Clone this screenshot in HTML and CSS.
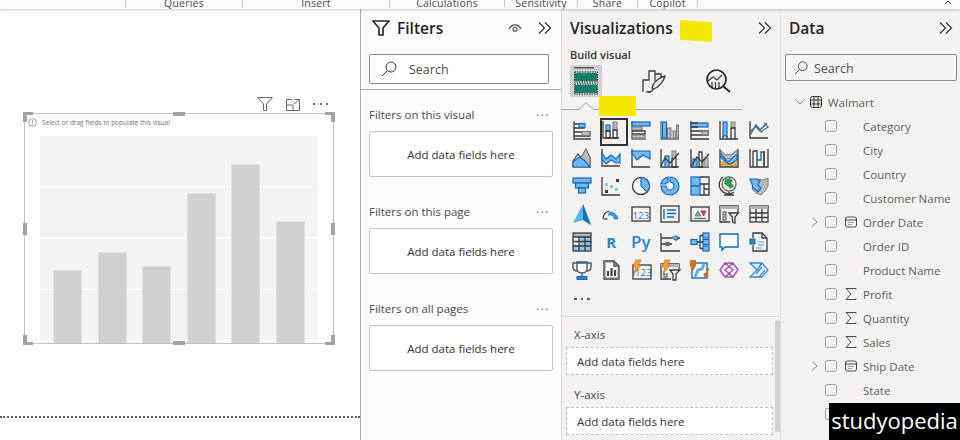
FILE: index.html
```html
<!DOCTYPE html>
<html lang="en">
<head>
<meta charset="utf-8">
<title>Power BI report view</title>
<link rel="stylesheet" href="styles.css">
</head>
<body>
<div class="app">
  <header class="ribbon">
    <div class="seg seg-0"></div>
    <div class="seg seg-q">Queries</div>
    <div class="seg seg-i">Insert</div>
    <div class="seg seg-c">Calculations</div>
    <div class="seg seg-se">Sensitivity</div>
    <div class="seg seg-sh">Share</div>
    <div class="seg seg-co">Copilot</div>
    <svg class="collapse" viewBox="0 0 10 4"><path d="M1 4 4 1 7 4"/></svg>
  </header>
  <main class="main">
    <section class="canvas">
      <div class="actions">
        <svg class="act-funnel" viewBox="0 0 16 14"><path d="M.5.5h15L9.5 7v6.5h-3V7z"/></svg>
        <svg class="act-focus" viewBox="0 0 14 12"><path d="M.5 1V11.500H13.500V1.500M.5.500H6M8.500.500H13.500V5M.5 6H7V11.500M8 5 13 .8"/></svg>
        <div class="act-dots"><i></i><i></i><i></i></div>
      </div>
      <div class="visual">
        <span class="h c-tl"></span><span class="h c-tr"></span><span class="h c-bl"></span><span class="h c-br"></span>
        <span class="h m-t"></span><span class="h m-b"></span><span class="h m-l"></span><span class="h m-r"></span>
        <div class="hint">
          <svg class="hint-ic" viewBox="0 0 9 9"><circle cx="4.500" cy="4.500" r="3.900"/><path d="M4.500 2.200v3M4.500 6v1"/></svg>
          <span>Select or drag fields to populate this visual</span>
        </div>
        <div class="chart">
          <div class="bar" style="height:73px"></div>
          <div class="bar" style="height:91px"></div>
          <div class="bar" style="height:77px"></div>
          <div class="bar" style="height:150px"></div>
          <div class="bar" style="height:179px"></div>
          <div class="bar" style="height:122px"></div>
        </div>
      </div>
      <div class="page-edge"></div>
    </section>

    <section class="filters">
      <div class="pane-head">
        <svg class="big-funnel" viewBox="0 0 18 16"><path d="M1 1h16l-6 7v7H7V8z"/></svg>
        <h2 class="title">Filters</h2>
        <svg class="eye" viewBox="0 0 14 10"><path d="M1 6c3-5.500 9-5.500 12 0"/><circle cx="7" cy="6.300" r="2"/></svg>
        <svg class="chev" viewBox="0 0 14 12"><path d="M1 .5 6.500 6 1 11.500M7 .5 12.500 6 7 11.500"/></svg>
      </div>
      <div class="search f-search">
        <svg class="mag" viewBox="0 0 16 16"><circle cx="10" cy="6" r="5"/><path d="M6.500 9.500 1 15"/></svg>
        <span>Search</span>
      </div>
      <div class="rule"></div>
      <div class="fgroup">
        <div class="fhead"><span>Filters on this visual</span><b class="red-dots">...</b></div>
        <div class="fbox">Add data fields here</div>
      </div>
      <div class="fgroup">
        <div class="fhead"><span>Filters on this page</span><b class="red-dots">...</b></div>
        <div class="fbox">Add data fields here</div>
      </div>
      <div class="fgroup">
        <div class="fhead"><span>Filters on all pages</span><b class="red-dots">...</b></div>
        <div class="fbox">Add data fields here</div>
      </div>
    </section>

    <section class="viz">
      <div class="pane-head viz-head">
        <h2 class="title">Visualizations</h2>
        <svg class="chev" viewBox="0 0 14 12"><path d="M1 .5 6.500 6 1 11.500M7 .5 12.500 6 7 11.500"/></svg>
      </div>
      <div class="build">Build visual</div>
      <div class="tabs">
        <div class="tab-active">
          <svg class="tab-ic" viewBox="0 0 26 28"><path class="l" d="M1 .8H21"/><rect class="teal" x="2" y="6" width="22" height="8"/><rect class="teal" x="2" y="18" width="22" height="8"/><rect class="dash" x="1.500" y="5" width="23" height="10"/><rect class="dash" x="1.500" y="17" width="23" height="10"/></svg>
        </div>
        <svg class="tab-brush" viewBox="0 0 24 24"><path class="l" d="M1 23V11H7V2H13V12M13 5H19V9"/><path class="l" d="M4 23H9"/><path class="l" d="M10 19C11 13 18 8 23 7 22 12 17 18 12 20Z"/><path class="l" d="M6 23C9 23 11 22 11 19"/></svg>
        <svg class="tab-mag" viewBox="0 0 25 24"><circle class="l2" cx="10.500" cy="10.500" r="9.500"/><path class="l2" d="M17.500 17.500 24 23"/><path class="l" d="M2 12 7 8 11 11 16 6"/><path class="l" d="M6 13V19M9.500 13V20M13 13V19"/></svg>
      </div>
      <div class="tabline"><svg class="caret" viewBox="0 0 16 8"><path d="M0 8 8 .8 16 8"/></svg></div>

      <div class="gallery">
        <!-- row 1 -->
        <div class="cell"><svg class="ic" viewBox="0 0 20 20"><path class="l" d="M2 1V19H19M2 4H12V8H2M2 12H18V16H2"/><rect class="fb" x="7" y="3.500" width="6" height="4"/><rect class="fg" x="10" y="11.500" width="8" height="4"/></svg></div>
        <div class="cell cell-sel"><svg class="ic" viewBox="0 0 20 20"><path class="l" d="M2 1V18H18"/><rect class="fb" x="5" y="5" width="4" height="6"/><path class="l" d="M5 11H9V18H5z"/><rect class="fg" x="12" y="2" width="4" height="8"/><path class="l" d="M12 10H16V18H12z"/></svg></div>
        <div class="cell"><svg class="ic" viewBox="0 0 20 20"><path class="l-g" d="M1 1V19H15"/><rect class="fb" x="1" y="2" width="18" height="4"/><rect class="fg" x="1" y="7" width="10" height="3"/><path class="l" d="M1 11H14V14H1"/><rect class="fg" x="1" y="15" width="13" height="3"/></svg></div>
        <div class="cell"><svg class="ic" viewBox="0 0 20 20"><path class="l-g" d="M1 1V19H19"/><rect class="fb" x="2.500" y="2" width="4" height="16"/><rect class="fg" x="7.500" y="8" width="3.500" height="10"/><rect class="fg" x="13" y="11" width="3" height="7"/><rect class="fg" x="16.500" y="5" width="2" height="13"/></svg></div>
        <div class="cell"><svg class="ic" viewBox="0 0 20 20"><path class="l" d="M1 1V19H19"/><rect class="fb" x="1" y="3" width="17" height="4"/><path class="l" d="M1 3H8M1 7H8M1 11H18V15H1"/><rect class="fg" x="12" y="11" width="6" height="4"/></svg></div>
        <div class="cell"><svg class="ic" viewBox="0 0 20 20"><path class="l" d="M1 1V19H19"/><rect class="fb" x="4" y="2" width="4" height="14"/><path class="l" d="M4 16V19M8 16V19"/><rect class="fg" x="12" y="2" width="4" height="6"/><path class="l" d="M12 8H16V19M12 8V19"/></svg></div>
        <div class="cell"><svg class="ic" viewBox="0 0 20 20"><path class="l" d="M1 1V18H19"/><path class="b" d="M1 15 7 5 11 10 18 3"/><path class="l-g" d="M1 11 7 7 12 12 19 7 15 3"/></svg></div>
        <!-- row 2 -->
        <div class="cell"><svg class="ic" viewBox="0 0 20 20"><path class="fw" d="M1 13 6 6 9 10 14 1 18 10V19H1z"/><path class="fg" d="M14 1 18 10V19H11L9 10z"/><path class="fb" d="M1 19V14L7 9 12 12 18 19z"/></svg></div>
        <div class="cell"><svg class="ic" viewBox="0 0 20 20"><path class="l" d="M1 1V18H19"/><path class="fb" d="M1 5 5 11 10 7 15 11 19 6V15H15L10 12 5 16 1 11z"/></svg></div>
        <div class="cell"><svg class="ic" viewBox="0 0 20 20"><path class="l" d="M1 1V19H19"/><path class="fb" d="M1 5 6 12 12 7 19 11V3H1z"/></svg></div>
        <div class="cell"><svg class="ic" viewBox="0 0 20 20"><path class="l" d="M1 1V19H19"/><rect class="fb" x="5" y="8" width="4" height="11"/><rect class="fg" x="12" y="3" width="4" height="7"/><path class="l" d="M12 10V19H16V10"/><path class="l" d="M1 18 5 10 10 15 19 5"/></svg></div>
        <div class="cell"><svg class="ic" viewBox="0 0 20 20"><path class="l" d="M1 1V19H19"/><rect class="fb" x="3" y="11" width="4" height="8"/><path class="l" d="M9 4H12V19H9z"/><rect class="fg" x="14" y="10" width="4" height="9"/><path class="l" d="M1 18 7 9 12 14 19 6"/></svg></div>
        <div class="cell"><svg class="ic" viewBox="0 0 20 20"><path class="l" d="M1 1V19H19V1"/><path class="fg" d="M2 3 7 7 13 6 18 2V8L13 11 7 11 2 7z"/><path class="fo" d="M2 13H18V18H2z"/><path class="fb" d="M2 6C5 9 7 15 10 13 13 11 15 7 18 7V12C14 13 13 17 10 16 6 15 5 11 2 10z"/></svg></div>
        <div class="cell"><svg class="ic" viewBox="0 0 20 20"><path class="l" d="M1 1V19H19V1"/><path class="l" d="M4 3V19M8 12V19M4 3H8V19"/><path class="b" d="M8 12H12V4H15V19"/><path class="l" d="M15 3V19"/></svg></div>
        <!-- row 3 -->
        <div class="cell"><svg class="ic" viewBox="0 0 20 20"><rect class="fb" x="1" y="2" width="18" height="5"/><rect class="fb" x="3.500" y="7" width="13" height="5"/><rect class="fb" x="6.500" y="12" width="7" height="5"/></svg></div>
        <div class="cell"><svg class="ic" viewBox="0 0 20 20"><path class="l" d="M1 1V19H19"/><rect class="nb" x="4" y="7" width="3" height="3"/><rect class="nb" x="9" y="9" width="3" height="3"/><rect class="nb" x="14" y="12" width="3" height="3"/><rect class="nd" x="15" y="3" width="3" height="3"/><rect class="nd" x="4" y="14" width="3" height="3"/></svg></div>
        <div class="cell"><svg class="ic" viewBox="0 0 20 20"><circle class="l w" cx="10" cy="10" r="8.500"/><path class="fb" d="M10 1.500A8.500 8.500 0 0 1 18.500 10 8.500 8.500 0 0 1 16 16L10 10z"/></svg></div>
        <div class="cell"><svg class="ic" viewBox="0 0 20 20"><path class="fb" d="M10 1A9 9 0 1 1 1 10H6A4 4 0 1 0 10 6z"/><path class="fb" d="M8 1.200A9 9 0 0 0 1 8H6A4 4 0 0 1 8 6z"/></svg></div>
        <div class="cell"><svg class="ic" viewBox="0 0 20 20"><rect class="fb" x="1" y="1" width="9" height="9"/><rect class="fb" x="1" y="10" width="9" height="9"/><path class="l" d="M10 1H19V19H10M10 8H19M14 8V19M14 13H19"/></svg></div>
        <div class="cell"><svg class="ic" viewBox="0 0 20 20"><circle class="l-g" cx="10" cy="8" r="7"/><path class="green" d="M6 3 11 2 14 5 12 7 15 10 11 13 9 10 5 8z"/><path class="l" d="M4 1A9 9 0 0 0 15 16M10 16V19M5 19H15"/></svg></div>
        <div class="cell"><svg class="ic" viewBox="0 0 20 20"><path class="fg" d="M6 3 14 4 19 2 19 10 16 15 12 19 7 17 3 13z"/><path class="fb" d="M1 3H7L11 5 9 9 12 12 9 16 4 12 3 8z"/></svg></div>
        <!-- row 4 -->
        <div class="cell"><svg class="ic" viewBox="0 0 20 20"><path class="arrow" d="M11 0 19 21 11 16 1 19z"/><path class="arrow-d" d="M11 0 19 21 11 16z"/></svg></div>
        <div class="cell"><svg class="ic" viewBox="0 0 20 20"><path class="l" d="M2 15A8.500 8.500 0 0 1 8 7"/><path class="arc" d="M8 8A8.500 8.500 0 0 1 17 15H13.500A5 5 0 0 0 7 11"/><path class="l" d="M3 15H6.500"/></svg></div>
        <div class="cell"><svg class="ic" viewBox="0 0 20 20"><rect class="l" x="1" y="3" width="18" height="14"/><text class="n123" x="10" y="14.500">123</text></svg></div>
        <div class="cell"><svg class="ic" viewBox="0 0 20 20"><rect class="l" x="1" y="2" width="18" height="16"/><path class="b" d="M4 5V15M7 6H16M7 9.500H16M7 13H14"/></svg></div>
        <div class="cell"><svg class="ic" viewBox="0 0 20 20"><rect class="l" x="1" y="3" width="18" height="14"/><path class="tri-g" d="M5 12 8 7 11 12z"/><path class="tri-r" d="M11 7H16L13.500 12z"/><path class="l-g" d="M4 14.500H16"/></svg></div>
        <div class="cell"><svg class="ic" viewBox="0 0 20 20"><path class="l" d="M11 18H1V2H19V8"/><rect class="fg-n" x="1" y="2" width="18" height="3"/><rect class="l-g" x="4" y="8" width="3" height="3"/><rect class="l-g" x="4" y="13" width="3" height="3"/><path class="l w" d="M10 9H19.500L16 13V19L13.500 18V13z"/></svg></div>
        <div class="cell"><svg class="ic" viewBox="0 0 20 20"><rect class="l" x="1" y="2" width="18" height="16"/><rect class="fg-n" x="1" y="2" width="18" height="3"/><path class="l" d="M1 9H19M1 13.500H19M7 5V18M13 5V18"/></svg></div>
        <!-- row 5 -->
        <div class="cell"><svg class="ic" viewBox="0 0 20 20"><rect class="fg-n" x="1" y="1" width="18" height="4"/><rect class="nb" x="8" y="5" width="11" height="14"/><rect class="nb" x="1" y="13" width="18" height="6"/><rect class="l" x="1" y="1" width="18" height="18"/><path class="l" d="M1 5H19M1 9.500H19M1 14H19M7 5V19M13 5V19"/></svg></div>
        <div class="cell"><span class="lang lang-r">R</span></div>
        <div class="cell"><span class="lang lang-py">Py</span></div>
        <div class="cell"><svg class="ic" viewBox="0 0 20 20"><path class="l" d="M1 1V19H20M1 6H20M1 12H12"/><circle class="fb" cx="16" cy="6" r="2"/><rect class="l-g" x="6" y="10.500" width="3" height="3"/><rect class="fg" x="13" y="4.500" width="2" height="2"/></svg></div>
        <div class="cell"><svg class="ic" viewBox="0 0 20 20"><rect class="fb" x="1" y="7.500" width="6" height="5"/><rect class="fb" x="13" y="1" width="6" height="5"/><rect class="fb" x="13" y="7.500" width="6" height="5"/><rect class="fb" x="13" y="14" width="6" height="5"/><path class="l" d="M7 10H13M10 3.500V16.500M10 3.500H13M10 16.500H13"/></svg></div>
        <div class="cell"><svg class="ic" viewBox="0 0 20 20"><path class="b w" d="M1 2H19V15H6L3 18V15H1z"/></svg></div>
        <div class="cell"><svg class="ic" viewBox="0 0 20 20"><path class="l" d="M4 6V1H13L18 6V19H4V13"/><path class="l" d="M13 1V6H18"/><rect class="fb-s" x="1" y="7" width="5" height="5"/><path class="b-t" d="M9 10H15M9 13H15M7 16H13"/></svg></div>
        <!-- row 6 -->
        <div class="cell"><svg class="ic" viewBox="0 0 20 20"><path class="l-g2" d="M5 3H1V7C1 10 3 11 6 11M15 3H19V7C19 10 17 11 14 11"/><path class="l-g2 w" d="M5 2H15V9C15 12 12 13 10 13 8 13 5 12 5 9z"/><path class="b" d="M5 3H15M10 14V17"/><rect class="fb-s" x="5" y="16.500" width="10" height="3"/></svg></div>
        <div class="cell"><svg class="ic" viewBox="0 0 20 20"><path class="l w" d="M3 1H13L18 6V19H3z"/><path class="fg-s" d="M3 1H13L18 6V19H3V1ZM4.500 2.500V17.500H16.500V7H12V2.500z"/><path class="dbar" d="M7 11V16M10.500 8V16M14 10V16"/></svg></div>
        <div class="cell"><svg class="ic" viewBox="0 0 20 20"><rect class="l" x="2" y="5" width="18" height="14"/><text class="n123" x="12.500" y="16">123</text><path class="bolt" d="M5 0H10L7.500 5H10L3 14 5 7H2z"/></svg></div>
        <div class="cell"><svg class="ic" viewBox="0 0 20 20"><path class="l" d="M11 19H1V4H19V9"/><rect class="fg-n" x="1" y="4" width="18" height="3"/><path class="l w" d="M10 10H20L16 14V20H13V14z"/><rect class="l-g" x="4" y="14" width="3" height="3"/><path class="bolt" d="M5 0H10L7.500 5H10L3 14 5 7H2z"/></svg></div>
        <div class="cell"><svg class="ic" viewBox="0 0 20 20"><rect class="b w" x="2" y="3" width="15" height="15"/><path class="river" d="M5 17 8 10 12 9 14 4"/><path class="pin" d="M0 0H6V6L3 11 0 6z"/><rect class="or" x="16" y="8" width="3" height="3"/><circle class="or" cx="16" cy="15" r="2.500"/></svg></div>
        <div class="cell"><svg class="ic" viewBox="0 0 20 20"><path class="pa" d="M6 3H14L19 10 14 17H6L1 10zM6 3 14 10 6 17M14 3 6 10 14 17"/></svg></div>
        <div class="cell"><svg class="ic" viewBox="0 0 20 20"><path class="pw" d="M1 3H13L19 10 13 17H1L8 10zM8 10 13 3M7 14 13 7M10 17 16 10"/></svg></div>
        <!-- row 7 -->
        <div class="cell"><div class="more"><i></i><i></i><i></i></div></div>
      </div>

      <div class="wells">
        <div class="well-label">X-axis</div>
        <div class="well">Add data fields here</div>
        <div class="well-label">Y-axis</div>
        <div class="well">Add data fields here</div>
        <span class="thumb"></span>
      </div>
      <span class="mark mark-a"></span>
      <span class="mark mark-b"></span>
    </section>

    <section class="data">
      <div class="pane-head data-head">
        <h2 class="title">Data</h2>
        <svg class="chev" viewBox="0 0 14 12"><path d="M1 .5 6.500 6 1 11.500M7 .5 12.500 6 7 11.500"/></svg>
      </div>
      <div class="search d-search">
        <svg class="mag" viewBox="0 0 16 16"><circle cx="10" cy="6" r="5"/><path d="M6.500 9.500 1 15"/></svg>
        <span>Search</span>
      </div>
      <div class="table-row">
        <svg class="tw-down" viewBox="0 0 10 6"><path d="M.5.5 5 5 9.500.5"/></svg>
        <svg class="tbl" viewBox="0 0 12 12"><rect x=".5" y=".5" width="11" height="11" rx="2"/><path d="M.5 4H11.500M.5 8H11.500M4 .5V11.500M8 .5V11.500"/></svg>
        <span>Walmart</span>
      </div>
      <ul class="fields">
        <li><i class="tw"></i><i class="cb"></i><i class="ty"></i><span>Category</span></li>
        <li><i class="tw"></i><i class="cb"></i><i class="ty"></i><span>City</span></li>
        <li><i class="tw"></i><i class="cb"></i><i class="ty"></i><span>Country</span></li>
        <li><i class="tw"></i><i class="cb"></i><i class="ty"></i><span>Customer Name</span></li>
        <li><svg class="tw" viewBox="0 0 15 12"><path d="M2 1.500 7 6 2 10.500"/></svg><i class="cb"></i><svg class="ty" viewBox="0 0 12 12"><rect x=".5" y="1" width="11" height="10" rx="2"/><path d="M.5 4H11.500M3.500 6.500h1M5.500 6.500h1M7.500 6.500h1M3.500 8.500h1M5.500 8.500h1"/></svg><span>Order Date</span></li>
        <li><i class="tw"></i><i class="cb"></i><i class="ty"></i><span>Order ID</span></li>
        <li><i class="tw"></i><i class="cb"></i><i class="ty"></i><span>Product Name</span></li>
        <li><i class="tw"></i><i class="cb"></i><svg class="ty" viewBox="0 0 12 12"><path d="M11 1.500V.5H1L6 6 1 11.500H11V10.500"/></svg><span>Profit</span></li>
        <li><i class="tw"></i><i class="cb"></i><svg class="ty" viewBox="0 0 12 12"><path d="M11 1.500V.5H1L6 6 1 11.500H11V10.500"/></svg><span>Quantity</span></li>
        <li><i class="tw"></i><i class="cb"></i><svg class="ty" viewBox="0 0 12 12"><path d="M11 1.500V.5H1L6 6 1 11.500H11V10.500"/></svg><span>Sales</span></li>
        <li><svg class="tw" viewBox="0 0 15 12"><path d="M2 1.500 7 6 2 10.500"/></svg><i class="cb"></i><svg class="ty" viewBox="0 0 12 12"><rect x=".5" y="1" width="11" height="10" rx="2"/><path d="M.5 4H11.500M3.500 6.500h1M5.500 6.500h1M7.500 6.500h1M3.500 8.500h1M5.500 8.500h1"/></svg><span>Ship Date</span></li>
        <li><i class="tw"></i><i class="cb"></i><i class="ty"></i><span>State</span></li>
        <li><i class="tw"></i><i class="cb"></i><i class="ty"></i><span></span></li>
      </ul>
      <div class="brand">studyopedia</div>
    </section>
  </main>
</div>
</body>
</html>
```

FILE: styles.css
```css
* { box-sizing: border-box; }
html, body { margin: 0; height: 100%; overflow: hidden; }
body { background: #fff; font-family: "Open Sans", "Noto Sans", sans-serif; color: #323130; }
.app { width: 960px; height: 440px; display: flex; flex-direction: column; overflow: hidden; }
svg { display: block; }
h2 { margin: 0; }

/* ribbon */
.ribbon { position: relative; z-index: 2; flex: 0 0 9px; height: 9px; display: flex; background: #fbfbfb; box-shadow: 0 1px 3px rgba(0,0,0,.22); overflow: hidden; }
.seg { height: 7px; border-right: 1px solid #c6c6c6; text-align: center; font-size: 10.500px; line-height: 7px; color: #4a4a4a; letter-spacing: .02em; }
.seg-0 { width: 126px; }
.seg-q { width: 117px; }
.seg-i { width: 147px; }
.seg-c { width: 115px; }
.seg-se { width: 73px; }
.seg-sh { width: 60px; }
.seg-co { width: 60px; }
.collapse { position: absolute; right: 6px; top: 0; width: 10px; height: 4px; fill: none; stroke: #333; stroke-width: 1; }

.main { flex: 1; display: flex; min-height: 0; }

/* canvas */
.canvas { flex: 0 0 361px; width: 361px; background: #fff; border-right: 1px solid #aeaeae; padding: 85px 0 0 24px; display: flex; flex-direction: column; }
.canvas > * { flex: none; }
.actions { width: 310px; height: 19px; display: flex; align-items: center; padding-left: 233px; }
.act-funnel { width: 16px; height: 14px; fill: none; stroke: #666; stroke-width: 1; }
.act-focus { width: 14px; height: 12px; margin-left: 13px; margin-top: 2px; fill: none; stroke: #666; stroke-width: 1; }
.act-dots { display: flex; gap: 4.500px; margin-left: 13px; }
.act-dots i { width: 2px; height: 2px; background: #707070; }
.visual { position: relative; width: 310px; height: 231px; border: 1px solid #c2c2c2; padding: 0 15px; }
.h { position: absolute; background: #a3a3a3; }
.c-tl, .c-tr, .c-bl, .c-br { width: 10px; height: 10px; background: none; border: 0 solid #a3a3a3; }
.c-tl { left: -2px; top: -2px; border-width: 3px 0 0 4px; }
.c-tr { right: -2px; top: -2px; border-width: 3px 4px 0 0; }
.c-bl { left: -2px; bottom: -2px; border-width: 0 0 3px 4px; }
.c-br { right: -2px; bottom: -2px; border-width: 0 4px 3px 0; }
.m-t { left: 148px; top: -2px; width: 12px; height: 4px; }
.m-b { left: 148px; bottom: -2px; width: 12px; height: 4px; }
.m-l { left: -2px; top: 109px; width: 4px; height: 12px; }
.m-r { right: -2px; top: 109px; width: 4px; height: 12px; }
.hint { height: 22px; margin-left: -12px; display: flex; align-items: center; gap: 5px; padding-bottom: 6px; font-size: 6.500px; color: #77706b; white-space: nowrap; }
.hint-ic { width: 9px; height: 9px; fill: none; stroke: #b26a4a; stroke-width: .7; }
.chart { height: 207px; width: 278px; padding: 0 13px; display: flex; align-items: flex-end; justify-content: space-between; background-color: #f3f3f3; background-image: repeating-linear-gradient(to bottom, #f3f3f3 0, #f3f3f3 50px, #fdfdfd 50px, #fdfdfd 51.500px); }
.bar { width: 29px; background: #d0d1d2; border: 1px solid #dfe0e0; border-bottom: 0; }
.page-edge { margin: 72px 0 0 -24px; width: 360px; border-top: 2px dotted #5c5c5c; }

/* panes */
.filters { flex: 0 0 201px; background: #fdfdfd; border-right: 1px solid #d6d4d2; padding-top: 8px; display: flex; flex-direction: column; }
.filters > *, .viz > *, .data > * { flex: none; }
.pane-head { height: 22px; display: flex; align-items: center; }
.title { font-size: 15.500px; font-weight: 600; line-height: 22px; color: #252423; flex: 1; }
.big-funnel { width: 18px; height: 16px; margin: 0 7px 0 11px; fill: none; stroke: #252423; stroke-width: 1.600; }
.eye { width: 14px; height: 10px; margin-right: 16px; fill: none; stroke: #444; stroke-width: 1.100; }
.chev { width: 14px; height: 12px; margin-right: 9px; fill: none; stroke: #323130; stroke-width: 1.200; }
.search { display: flex; align-items: center; background: #fff; border: 1px solid #8a8886; border-radius: 2px; font-size: 12.500px; color: #4f4d4b; }
.f-search { width: 180px; height: 30px; margin: 15px 0 0 8px; padding-left: 11px; gap: 12px; }
.mag { width: 16px; height: 16px; fill: none; stroke: #3b3a39; stroke-width: 1; }
.rule { margin-top: 5px; height: 1px; background: #b1b1b1; }
.fgroup { padding: 17px 8px 0; height: 97px; }
.fhead { height: 15px; display: flex; justify-content: space-between; align-items: center; font-size: 11.500px; color: #4a4846; }
.red-dots { font-weight: 400; font-size: 12px; letter-spacing: 1.500px; color: #bb4a2a; position: relative; top: -3px; right: 3px; }
.fbox { margin-top: 9px; height: 46px; border: 1px solid #c8c6c4; border-radius: 2px; background: #fff; display: flex; align-items: center; justify-content: center; font-size: 11.500px; color: #333; }

/* visualizations */
.viz { position: relative; flex: 0 0 219px; background: #f3f2f1; border-right: 1px solid #e1dfdd; padding-top: 8px; display: flex; flex-direction: column; }
.viz-head { padding-left: 8px; }
.viz-head .chev { margin-right: 8px; }
.build { margin: 8px 0 0 8px; height: 16px; line-height: 16px; font-size: 11px; font-weight: 600; color: #323130; }
.tabs { height: 32px; margin: 2px 0 0 8px; display: flex; align-items: center; }
.tab-active { width: 32px; height: 32px; background: #d2d0ce; border-radius: 2px; display: flex; align-items: center; justify-content: center; }
.tab-ic { width: 26px; height: 28px; }
.tab-brush { width: 24px; height: 24px; margin-left: 40px; }
.tab-mag { width: 25px; height: 24px; margin-left: 40px; }
.tabline { position: relative; margin-top: 12px; width: 180px; height: 1px; background: #a6a6a6; }
.caret { position: absolute; left: 16px; top: -7px; width: 16px; height: 8px; fill: #f3f2f1; stroke: #a6a6a6; stroke-width: 1; }
.gallery { margin: 6px 0 0 5px; display: grid; grid-template-columns: repeat(7, 29.500px); grid-auto-rows: 28px; }
.cell { display: flex; align-items: center; justify-content: center; }
.cell-sel { position: relative; }
.cell-sel::after { content: ""; position: absolute; left: 3px; top: 2px; width: 24px; height: 24px; border: 2px solid #333; }
.ic { width: 20px; height: 20px; overflow: visible; }
.l { fill: none; stroke: #3b3a39; stroke-width: 1.300; }
.l-g { fill: none; stroke: #6a6a6a; stroke-width: 1.300; }
.l-g2 { fill: none; stroke: #555; stroke-width: 1.400; }
.l2 { fill: none; stroke: #252423; stroke-width: 1.700; }
.b { fill: none; stroke: #0f6cbd; stroke-width: 1.400; }
.w { fill: #fff; }
.b-t { fill: none; stroke: #4a9ad8; stroke-width: 1; }
.fb { fill: #75b6ee; stroke: #0f6cbd; stroke-width: 1.200; }
.fb-s { fill: #2f86cc; stroke: #0f6cbd; stroke-width: 1; }
.fg { fill: #b9b9b9; stroke: #7c7c7c; stroke-width: 1; }
.fg-n { fill: #b5b5b5; }
.fg-s { fill: #777; }
.fw { fill: #fff; stroke: #3b3a39; stroke-width: 1.200; }
.fo { fill: #f0a33c; }
.nb { fill: #8cc4f2; }
.nd { fill: #3b3a39; }
.green { fill: #2e9a4a; }
.arrow { fill: #55b4e8; }
.arrow-d { fill: #1670b8; }
.arc { fill: #3f9adf; stroke: #0f6cbd; stroke-width: .8; }
.n123 { font-family: "Open Sans", sans-serif; font-size: 9.500px; text-anchor: middle; fill: #1f77c4; letter-spacing: .3px; }
.tri-g { fill: #6fc38a; stroke: #2e8b57; stroke-width: .8; }
.tri-r { fill: #e8384f; stroke: #b02238; stroke-width: .8; }
.dbar { fill: none; stroke: #444; stroke-width: 2.200; }
.bolt { fill: #f2a33a; stroke: #c4661a; stroke-width: .7; }
.river { fill: none; stroke: #6fa8dc; stroke-width: 3; }
.pin { fill: #d4711f; }
.or { fill: #d4711f; }
.pa { fill: none; stroke: #a34fae; stroke-width: 1.400; }
.pw { fill: none; stroke: #2a8be0; stroke-width: 1.300; }
.dash { fill: none; stroke: #222; stroke-width: 1; stroke-dasharray: 1.500 1; }
.teal { fill: #0f7f6c; }
.lang { font-weight: 700; color: #2a86c8; line-height: 20px; }
.lang-r { font-size: 15px; }
.lang-py { font-size: 17px; font-weight: 600; }
.more { display: flex; gap: 4px; margin-top: 2px; }
.more i { width: 2.500px; height: 2.500px; background: #a8492c; }
.more i:first-child { background: #3b5f80; }

.wells { position: relative; margin-top: 4px; height: 125px; border-top: 1px solid #dedcda; padding: 9px 0 0 4px; }
.well-label { height: 17px; padding-left: 8px; font-size: 11.500px; line-height: 17px; color: #4a4846; }
.well { margin: 4px 0 11px; width: 207px; height: 28px; background: #fff; border: 1px dashed #c4c2c0; display: flex; align-items: center; padding-left: 10px; font-size: 11.500px; color: #333; }
.thumb { position: absolute; right: 0; top: 3px; width: 5px; height: 112px; background: #d2d0ce; border-radius: 3px; }
.mark { position: absolute; background: #f5e800; }
.mark-a { left: 118px; top: 11px; width: 32px; height: 22px; clip-path: polygon(0 0, 100% 10%, 100% 100%, 0 90%); }
.mark-b { left: 37px; top: 87px; width: 37px; height: 20px; }

/* data */
.data { position: relative; flex: 1; background: #f3f2f1; padding-top: 8px; display: flex; flex-direction: column; overflow: hidden; }
.data-head { padding-left: 8px; }
.data-head .chev { margin-right: 7px; }
.d-search { width: 172px; height: 27px; margin: 15px 0 0 4px; padding: 1px 0 0 8px; gap: 6px; background: #f6f5f4; border-color: #8a8886; }
.d-search .mag { width: 14px; height: 14px; }
.table-row { height: 24px; margin-top: 9px; padding-left: 14px; display: flex; align-items: center; font-size: 11.500px; color: #605e5c; }
.tw-down { width: 10px; height: 6px; margin-right: 5px; fill: none; stroke: #8a8886; stroke-width: 1; }
.tbl { width: 12px; height: 12px; margin-right: 6px; fill: none; stroke: #333; stroke-width: 1; }
.fields { list-style: none; margin: 0; padding: 0 0 0 29px; }
.fields li { height: 24px; display: flex; align-items: center; font-size: 11.500px; color: #605e5c; white-space: nowrap; }
.tw { width: 15px; height: 12px; flex: none; fill: none; stroke: #8a8886; stroke-width: 1; }
.cb { width: 12px; height: 12px; flex: none; border: 1px solid #a19f9d; border-radius: 2px; background: #f6f5f4; margin-right: 8px; }
.ty { width: 12px; height: 12px; flex: none; margin-right: 6px; fill: none; stroke: #4a4846; stroke-width: 1; }
.brand { position: absolute; left: 48px; top: 394px; width: 131px; height: 37px; background: #000; color: #fff; font-size: 22px; line-height: 35px; text-align: center; font-family: "Open Sans", sans-serif; }
```
